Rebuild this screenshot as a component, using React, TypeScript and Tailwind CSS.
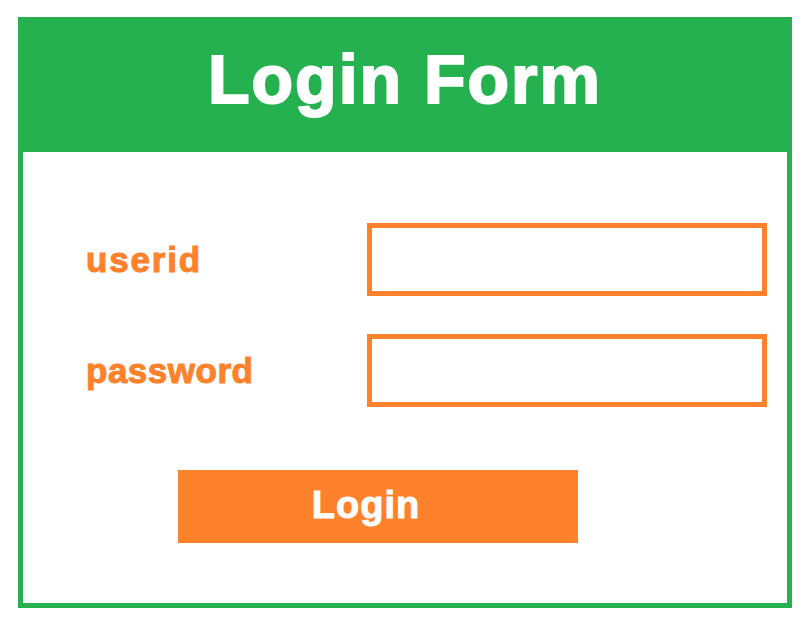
export default function App() {
  return (
    <div className="min-h-screen bg-white pl-[18px] pt-[17px]">
      <div
        className="flex h-[591px] w-[774px] flex-col border-[5px] border-[#25b14f] bg-white"
        style={{ fontFamily: '"Liberation Sans", Arial, sans-serif' }}
      >
        <div className="flex h-[130px] items-center justify-center bg-[#25b14f] pb-[16px]">
          <h1 className="text-[68px] font-bold leading-none tracking-[2px] text-white [-webkit-text-stroke:2px_currentColor]">
            Login Form
          </h1>
        </div>

        <div className="flex flex-col pt-[71px]">
          <div className="flex items-center">
            <label className="w-[344px] pl-[63px] text-[35px] font-bold leading-none tracking-[1.8px] text-[#fd822b] [-webkit-text-stroke:1px_currentColor]">
              userid
            </label>
            <input
              type="text"
              className="h-[73px] w-[400px] border-[5px] border-[#fd822b] bg-white outline-none"
            />
          </div>

          <div className="mt-[38px] flex items-center">
            <label className="w-[344px] pl-[63px] text-[35px] font-bold leading-none tracking-[0.5px] text-[#fd822b] [-webkit-text-stroke:1px_currentColor]">
              password
            </label>
            <input
              type="password"
              className="h-[73px] w-[400px] border-[5px] border-[#fd822b] bg-white outline-none"
            />
          </div>

          <div className="mt-[63px] pl-[155px]">
            <button className="flex h-[73px] w-[400px] items-center justify-center bg-[#fd822b] pb-[4px] pr-[24px] text-[38px] font-bold leading-none tracking-[1px] text-white [-webkit-text-stroke:1px_currentColor]">
              Login
            </button>
          </div>
        </div>
      </div>
    </div>
  );
}
